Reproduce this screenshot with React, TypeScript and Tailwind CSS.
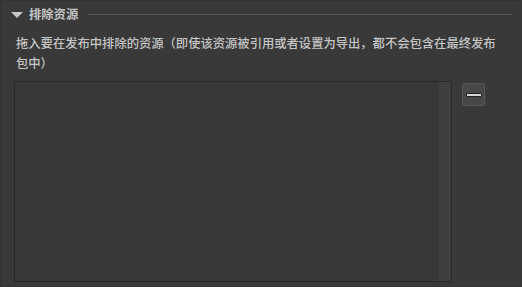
export default function App() {
  return (
    <div
      className="w-[522px] h-[287px] bg-[#393939] border border-[#333333] flex flex-col pr-[9px] overflow-hidden"
      style={{ fontFamily: '"Noto Sans CJK SC", "Noto Sans", sans-serif' }}
    >
      {/* Section header */}
      <div className="h-[27px] flex items-center pl-[10px]">
        <svg width="12" height="6" viewBox="0 0 12 6" className="shrink-0 mt-[1px]">
          <polygon points="0,0 12,0 6,6" fill="#c8c8c8" />
        </svg>
        <span className="ml-[6px] text-[12.3px] leading-none font-bold text-[#c4c4c4] whitespace-nowrap">
          排除资源
        </span>
        <div className="ml-[10px] flex-1 h-px bg-[#555555]" />
      </div>

      <p className="ml-[15px] mt-[5px] w-[482px] text-[12.3px] leading-[20px] font-medium text-[#c6c6c6]">
        拖入要在发布中排除的资源（即使该资源被引用或者设置为导出，都不会包含在最终发布包中）
      </p>

      <div className="flex items-start gap-[10px] ml-[13px] mt-[8px]">
        {/* Drop area */}
        <div className="w-[438px] h-[201px] bg-[#383838] border border-[#282828] flex justify-end">
          <div className="w-[12px] h-full bg-[#3f3f3f]" />
        </div>
        {/* Remove button */}
        <button className="mt-[2px] w-[23px] h-[23px] bg-[#474747] border border-[#575757] rounded-[2px] flex items-center justify-center">
          <div className="w-[16px] h-[4px] bg-[#d6d6d6] border border-[#222222] rounded-[1px]" />
        </button>
      </div>
    </div>
  );
}
